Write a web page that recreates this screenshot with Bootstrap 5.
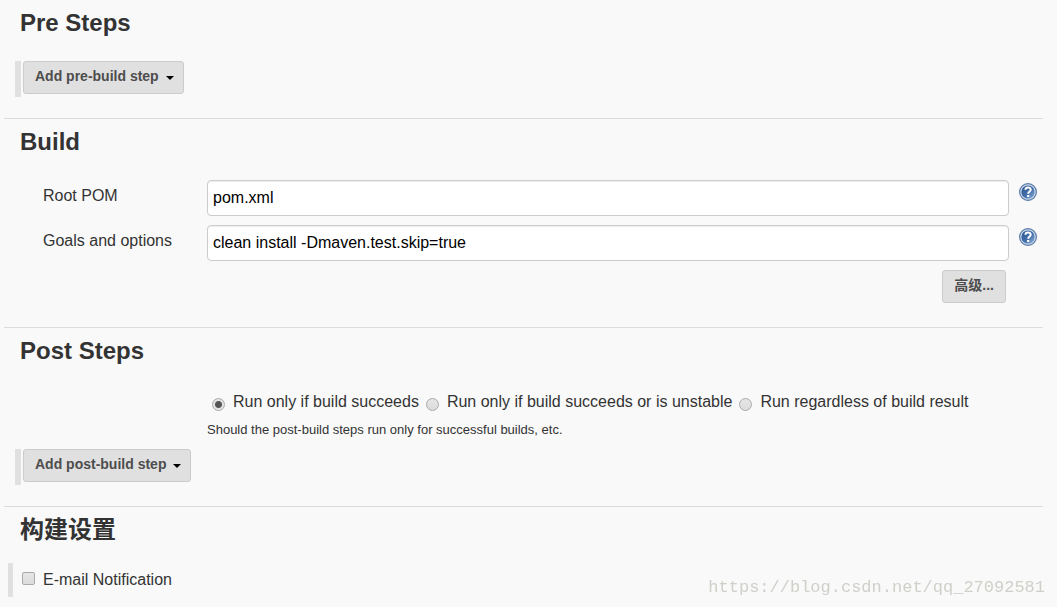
<!DOCTYPE html>
<html lang="zh-CN">
<head>
<meta charset="utf-8">
<meta name="viewport" content="width=device-width, initial-scale=1">
<title>Job configuration</title>
<link rel="stylesheet" href="https://cdn.jsdelivr.net/npm/bootstrap@5.3.0/dist/css/bootstrap.min.css">
<style>
  body { background: #f9f9f9; color: #333; font: 16px/24px "Liberation Sans", "Noto Sans CJK SC", sans-serif; }
  .config-form { padding: 0 14px 0 4px; }
  .config-section { padding: 9px 0 21px; }
  .config-section + .config-section { border-top: 1px solid #dcdcdc; }
  .section-title { font-size: 24px; line-height: 28px; font-weight: 700; margin: 0 0 24px 16px; }
  .step-handle { border-left: 6px solid #e0e0e0; margin-left: 11px; padding-left: 2px; height: 36px; }
  .btn-step { --bs-btn-color: #4d4d4d; --bs-btn-bg: #e0e0e0; --bs-btn-border-color: #ccc;
    --bs-btn-hover-bg: #d6d6d6; --bs-btn-hover-border-color: #bbb;
    --bs-btn-font-size: 14px; --bs-btn-font-weight: 700; --bs-btn-line-height: 16px;
    --bs-btn-padding-x: 11px; --bs-btn-padding-y: 6px; --bs-btn-border-radius: 3px;
    height: 33px; padding-bottom: 9px; }
  .btn-step.dropdown-toggle { padding-right: 9px; }
  .btn-step.dropdown-toggle::after { border-width: 4px 4px 0; color: #000; margin-left: 7px; vertical-align: 1px; }
  .config-row { padding-left: 39px; margin-bottom: 9px; }
  .config-label { width: 164px; flex: none; padding-top: 4px; }
  .config-input { height: 36px; padding: 0 5px; color: #000; font-size: 16px; border: 1px solid #ccc; border-radius: 4px; box-shadow: inset 0 1px 1px rgba(0,0,0,.075); }
  .help-link { width: 18px; height: 18px; margin: 3px 6px 0 10px; flex: none; line-height: 0; }
  .advanced-row { margin: 0 37px 3px 0; }
  .option-block { margin-left: 203px; padding-top: 1px; }
  .option-gap { column-gap: 2px; }
  .tick { appearance: none; width: 13px; height: 13px; flex: none; margin: 0; border: 1px solid #aaa; background: linear-gradient(#e6e6e6, #dcdcdc); }
  .tick-round { border-radius: 50%; margin: 4px 8px 0 5px; }
  .tick-round:checked { background: radial-gradient(circle, #555 0 3px, #e4e4e4 4px); }
  .tick-square { border-radius: 2px; margin: 0 8px 4px 9px; }
  .hint { font-size: 13px; line-height: 20px; margin: 6px 0 9px; }
  .notify-row { margin: -5px 0 0 4px; height: 34px; border-left: 5px solid #e0e0e0; }
  .watermark { position: fixed; right: 12px; bottom: 7px; font: 17px/24px "Liberation Mono", monospace; color: #d0d0ca; pointer-events: none; }
</style>
</head>
<body>
<form class="config-form">
  <section class="config-section">
    <h2 class="section-title">Pre Steps</h2>
    <div class="step-handle d-flex align-items-start">
      <button type="button" class="btn btn-step dropdown-toggle" data-bs-toggle="dropdown">Add pre-build step</button>
    </div>
  </section>

  <section class="config-section">
    <h2 class="section-title">Build</h2>
    <div class="config-row d-flex align-items-start">
      <label class="config-label" for="pom">Root POM</label>
      <input class="form-control config-input" id="pom" type="text" value="pom.xml">
      <a class="help-link" href="#" aria-label="Help for Root POM"><svg width="18" height="18" viewBox="0 0 18 18"><use href="#help-icon"/></svg></a>
    </div>
    <div class="config-row d-flex align-items-start">
      <label class="config-label" for="goals">Goals and options</label>
      <input class="form-control config-input" id="goals" type="text" value="clean install -Dmaven.test.skip=true">
      <a class="help-link" href="#" aria-label="Help for Goals and options"><svg width="18" height="18" viewBox="0 0 18 18"><use href="#help-icon"/></svg></a>
    </div>
    <div class="advanced-row d-flex justify-content-end">
      <button type="button" class="btn btn-step">高级...</button>
    </div>
  </section>

  <section class="config-section">
    <h2 class="section-title">Post Steps</h2>
    <div class="option-block">
      <div class="option-gap d-flex flex-wrap">
        <label class="d-flex align-items-center"><input class="tick tick-round" type="radio" name="post" checked>Run only if build succeeds</label>
        <label class="d-flex align-items-center"><input class="tick tick-round" type="radio" name="post">Run only if build succeeds or is unstable</label>
        <label class="d-flex align-items-center"><input class="tick tick-round" type="radio" name="post">Run regardless of build result</label>
      </div>
      <p class="hint">Should the post-build steps run only for successful builds, etc.</p>
    </div>
    <div class="step-handle d-flex align-items-start">
      <button type="button" class="btn btn-step dropdown-toggle" data-bs-toggle="dropdown">Add post-build step</button>
    </div>
  </section>

  <section class="config-section pb-0">
    <h2 class="section-title">构建设置</h2>
    <div class="notify-row d-flex align-items-center">
      <label class="d-flex align-items-center"><input class="tick tick-square" type="checkbox">E-mail Notification</label>
    </div>
  </section>
</form>
<div class="watermark">https://blog.csdn.net/qq_27092581</div>

<svg width="0" height="0" class="position-absolute" aria-hidden="true">
  <defs>
    <linearGradient id="help-fill" x1="0" y1="0" x2="1" y2="1">
      <stop offset="0" stop-color="#2c5590"/><stop offset=".55" stop-color="#4470aa"/><stop offset="1" stop-color="#8db0d8"/>
    </linearGradient>
    <symbol id="help-icon" viewBox="0 0 18 18">
      <circle cx="9" cy="9" r="8.4" fill="#c9d8ea" stroke="#5a7aa6" stroke-width="1.2"/>
      <circle cx="9" cy="9" r="6.6" fill="url(#help-fill)"/>
      <path d="M6.4 6.8C6.5 3.6 11.7 3.6 11.7 6.7C11.7 8.5 9.2 8.6 9.2 10.7" fill="none" stroke="#fff" stroke-width="2"/>
      <rect x="8.1" y="12" width="2.2" height="2" fill="#fff"/>
    </symbol>
  </defs>
</svg>
<script src="https://cdn.jsdelivr.net/npm/bootstrap@5.3.0/dist/js/bootstrap.bundle.min.js"></script>
</body>
</html>
